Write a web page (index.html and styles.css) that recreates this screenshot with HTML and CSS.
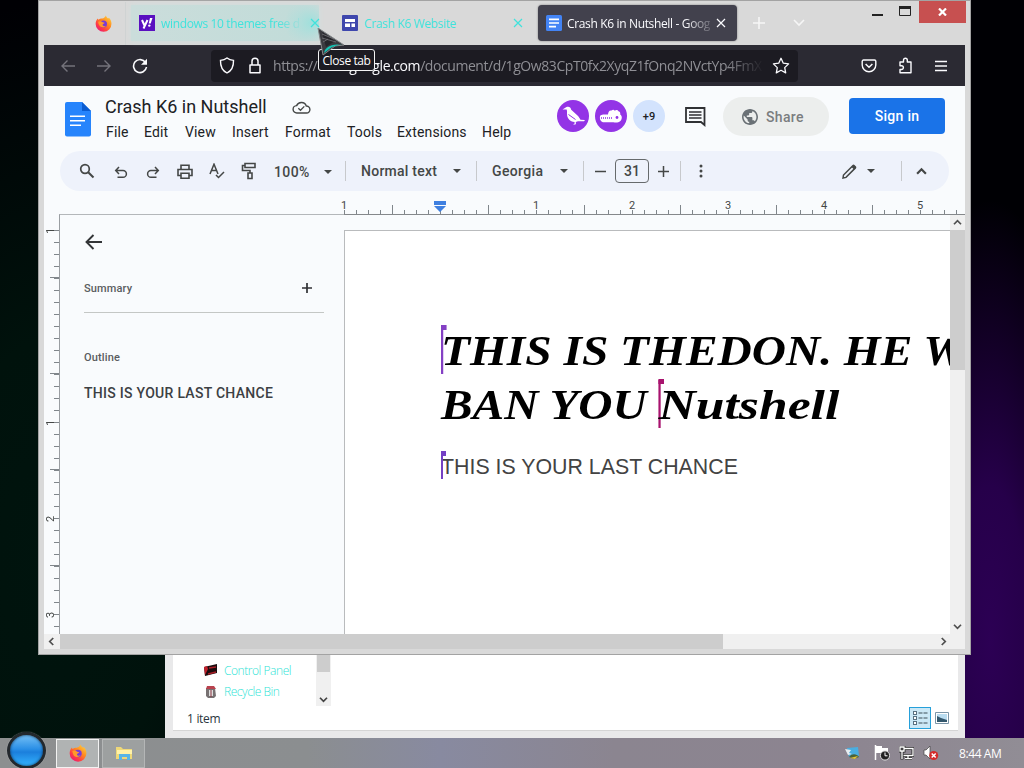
FILE: index.html
```html
<!DOCTYPE html>
<html lang="en">
<head>
    <meta charset="UTF-8">
    <meta name="viewport" content="width=device-width, initial-scale=1.0">
    <title>Crash K6 in Nutshell - Google Docs</title>
    <link rel="stylesheet" href="styles.css">
</head>
<body>
    <svg width="0" height="0" class="defs">
        <defs>
            <linearGradient id="fox" x1="1" y1="0" x2="0.2" y2="1">
                <stop offset="0" stop-color="#ffe14a"/>
                <stop offset="0.45" stop-color="#ff8a1f"/>
                <stop offset="0.75" stop-color="#ff3d45"/>
                <stop offset="1" stop-color="#e8167b"/>
            </linearGradient>
            <symbol id="firefox" viewBox="0 0 16 16">
                <path fill="url(#fox)" d="M10.2 0.4c.4 1.4 1.3 2 2.2 3l.7-.7c1.6 1.5 2.4 3.400 2.400 5.600A7.400 7.400 0 0 1 .6 8.400c0-2 .6-3.900 2-5.200l.5 1.200c1-.6 2.200-1.100 3.700-1.100C8.300 3 9.500 2 10.200.4z"/>
                <circle cx="8" cy="8.400" r="3.300" fill="#7a3bd6"/>
                <path fill="#ff9a2a" d="M3 6.300c1.500-.9 3-.5 4.300.5 1 .2 1.700.3 1.600.8-.3.700-1.500.8-1.800 1.500 0 1.300 1.700 1.800 3.200 1-1.400 2-5 2-6.300-.4-.6-1-.9-2.200-1-3.400z"/>
            </symbol>
            <symbol id="cross" viewBox="0 0 10 10">
                <path d="M1 1l8 8M9 1L1 9" fill="none" stroke="currentColor" stroke-width="1.200"/>
            </symbol>
            <symbol id="caret" viewBox="0 0 8 4"><path d="M0 0h8L4 4z" fill="currentColor"/></symbol>
            <symbol id="chev" viewBox="0 0 10 8"><path d="M1 6l4-4 4 4" fill="none" stroke="currentColor" stroke-width="2"/></symbol>
        </defs>
    </svg>

    <div class="desktop">

        <!-- explorer window, mostly behind the browser -->
        <div class="explorer">
            <div class="explorer-body">
                <div class="tree">
                    <div class="tree-item">
                        <svg width="14" height="13" viewBox="0 0 14 13"><path d="M0 3l13-3v9L1 12z" fill="#1b0c0e"/><path d="M0 3l3-1 1 3-3 6z" fill="#c3202c"/><path d="M5 4l7-1M4 10l8-2" stroke="#a91f28" stroke-width="1.500"/></svg>
                        <span>Control Panel</span>
                    </div>
                    <div class="tree-item bin">
                        <svg width="14" height="14" viewBox="0 0 14 14"><path d="M2 3h9l1 8-2 2H4l-2-2z" fill="#777172"/><path d="M3 1h7l2 3H2z" fill="#b9424e"/><path d="M5 5h4v6H5z" fill="#ddd"/><path d="M7 5v7" stroke="#8d3540"/></svg>
                        <span>Recycle Bin</span>
                    </div>
                </div>
                <div class="tree-scroll">
                    <div class="tree-thumb"></div>
                    <svg class="flip" width="9" height="7"><use href="#chev"/></svg>
                </div>
            </div>
            <div class="explorer-status">
                <span>1 item</span>
                <div class="view-btn active">
                    <svg width="16" height="14" viewBox="0 0 16 14"><g fill="#fff" stroke="#587080"><rect x="1.500" y=".5" width="3" height="3"/><rect x="1.500" y="5.500" width="3" height="3"/><rect x="1.500" y="10.500" width="3" height="3"/></g><path d="M6.500 2h4m1 0h4M6.500 7h4m1 0h4M6.500 12h4m1 0h4" stroke="#3d4e58"/></svg>
                </div>
                <div class="view-btn">
                    <svg width="14" height="12" viewBox="0 0 14 12"><path d="M.5.5h13v11H.5z" fill="#fff" stroke="#7b95a8"/><path d="M2 2h10v8H2z" fill="#b9dcf0"/><path d="M2 4l4 2 6 2v2H2z" fill="#33576c"/></svg>
                </div>
            </div>
        </div>

        <!-- firefox window -->
        <div class="browser">
            <div class="tabs">
                <div class="pinned"><svg width="17" height="17"><use href="#firefox"/></svg></div>
                <div class="tab hover">
                    <svg width="16" height="16" viewBox="0 0 16 16"><rect width="16" height="16" fill="#5a10c0"/><path d="M3 5l2.500 5.500M8.500 5l-4 8.500" fill="none" stroke="#fff" stroke-width="2"/><path d="M11 3h2.500l-1.800 5.500h-2z" fill="#fff"/><circle cx="10.300" cy="10.600" r="1.200" fill="#fff"/></svg>
                    <span class="tab-title t1">windows 10 themes free d</span>
                    <svg class="tab-x" width="10" height="10"><use href="#cross"/></svg>
                </div>
                <div class="tab">
                    <svg width="16" height="16" viewBox="0 0 16 16"><rect width="16" height="16" rx="1" fill="#3f47ad"/><path d="M3 4h10v3H3zM3 8.500h5V12H3zM9.500 8.500H13V12H9.500z" fill="#fff"/></svg>
                    <span class="tab-title t2">Crash K6 Website</span>
                    <svg class="tab-x" width="10" height="10"><use href="#cross"/></svg>
                </div>
                <div class="tab current">
                    <svg width="16" height="16" viewBox="0 0 16 16"><rect width="16" height="16" rx="1.500" fill="#4384f5"/><path d="M3 4.300h10M3 8h10M3 11.700h7" stroke="#fff" stroke-width="1.700"/></svg>
                    <span class="tab-title t3">Crash K6 in Nutshell - Goog</span>
                    <svg class="tab-x" width="10" height="10"><use href="#cross"/></svg>
                </div>
                <svg class="tab-tool" width="12" height="12" viewBox="0 0 12 12"><path d="M6 0v12M0 6h12" stroke="#f6f6f6" stroke-width="1.600"/></svg>
                <svg class="tab-tool list" width="12" height="8" viewBox="0 0 12 8"><path d="M1 1l5 5 5-5" fill="none" stroke="#f6f6f6" stroke-width="1.600"/></svg>
                <div class="win-btns">
                    <svg width="12" height="10" viewBox="0 0 12 10"><rect width="11" height="2" y="8" x="0" fill="#222"/></svg>
                    <svg width="12" height="10" viewBox="0 0 12 10"><path d="M.5 1.500h11v8H.5z" fill="none" stroke="#222"/><path d="M0 0h12v3H0z" fill="#222"/></svg>
                    <div class="win-close"><svg width="9" height="8" viewBox="0 0 9 8"><path d="M1 0.500l7 7M8 .5l-7 7" stroke="#fff" stroke-width="2.200"/></svg></div>
                </div>
            </div>

            <div class="navbar">
                <svg class="dim" width="16" height="14" viewBox="0 0 16 14"><path d="M15 7H2M7.500 1.500L2 7l5.500 5.500" fill="none" stroke="currentColor" stroke-width="1.400"/></svg>
                <svg class="dim" width="16" height="14" viewBox="0 0 16 14"><path d="M1 7h13M8.500 1.500L14 7l-5.500 5.500" fill="none" stroke="currentColor" stroke-width="1.400"/></svg>
                <svg class="reload" width="16" height="16" viewBox="0 0 16 16"><path d="M13.500 4.500A6.500 6.500 0 1 0 14.500 9" fill="none" stroke="currentColor" stroke-width="1.600"/><path d="M15 .8v6H9z" fill="currentColor"/></svg>
                <div class="urlbar">
                    <svg width="16" height="17" viewBox="0 0 16 17"><path d="M8 1c2 1.600 4.200 2.200 6.500 2.400C14.700 9.500 12.800 13.500 8 16 3.200 13.500 1.300 9.500 1.500 3.400 3.800 3.200 6 2.600 8 1z" fill="none" stroke="currentColor" stroke-width="1.400"/></svg>
                    <svg class="lock" width="12" height="17" viewBox="0 0 12 17"><path d="M1 8h10v7.800H1zM3 8V4.200a3 3 0 0 1 6 0V8" fill="none" stroke="currentColor" stroke-width="1.500" stroke-linejoin="round"/></svg>
                    <div class="url">https://docs.<b>google.com</b>/document/d/1gOw83CpT0fx2XyqZ1fOnq2NVctYp4FmX</div>
                    <svg width="18" height="17" viewBox="0 0 18 17"><path d="M9 1.300l2.300 4.900 5.300.7-3.900 3.700 1 5.300L9 13.300l-4.700 2.600 1-5.300L1.400 6.900l5.300-.7z" fill="none" stroke="currentColor" stroke-width="1.300" stroke-linejoin="round"/></svg>
                </div>
                <svg width="16" height="14" viewBox="0 0 16 14"><path d="M2.500 1h11a1.300 1.300 0 0 1 1.300 1.300V6a6.800 6.800 0 0 1-13.600 0V2.300A1.300 1.300 0 0 1 2.500 1z" fill="none" stroke="currentColor" stroke-width="1.400"/><path d="M4.600 5L8 8.300 11.400 5" fill="none" stroke="currentColor" stroke-width="1.500"/></svg>
                <svg width="15" height="17" viewBox="0 0 15 17"><path d="M2 5h3.500V3.200a1.900 1.900 0 0 1 3.800 0V5H13v10.800H2v-3.300h1.500a1.900 1.900 0 0 0 0-3.800H2z" fill="none" stroke="currentColor" stroke-width="1.400" stroke-linejoin="round"/></svg>
                <svg width="14" height="12" viewBox="0 0 14 12"><path d="M1 1.500h12M1 6h12M1 10.500h12" stroke="currentColor" stroke-width="1.400"/></svg>
            </div>

            <div class="docs">
                <div class="docs-header">
                    <svg class="docs-logo" width="26" height="35" viewBox="0 0 26 35"><path d="M2 0h15l9 9v23.500a2 2 0 0 1-2 2H2a2 2 0 0 1-2-2V2a2 2 0 0 1 2-2z" fill="#2684fc"/><path d="M17 0l9 9h-9z" fill="#0b5cd0"/><path d="M5 14.300h15M5 18.800h15M5 23.300h11" stroke="#fff" stroke-width="1.600"/></svg>
                    <div class="docs-title">
                        <div class="title-row">
                            <span class="doc-name">Crash K6 in Nutshell</span>
                            <svg width="19" height="13" viewBox="0 0 19 13"><path d="M5 12a3.700 3.700 0 0 1-.4-7.400A5.200 5.200 0 0 1 14.300 5 3.500 3.500 0 0 1 14.500 12z" fill="none" stroke="#444746" stroke-width="1.400"/><path d="M6.300 7.300l2.200 2L12.300 5.400" fill="none" stroke="#444746" stroke-width="1.300"/></svg>
                        </div>
                        <div class="menu">
                            <span>File</span><span>Edit</span><span>View</span><span>Insert</span><span>Format</span><span>Tools</span><span>Extensions</span><span>Help</span>
                        </div>
                    </div>
                    <div class="people">
                        <div class="avatar"><svg width="32" height="32" viewBox="0 0 32 32"><path d="M5.500 9.500L9.500 7c2.500-.8 4.300.3 4.700 2.800l6.300 5.700c1.400 1.400 2.300 3 3 4.200l4.500.3-1 1.200-6 .1-2.200.8.1 2.100-2.300.6v-.8l1.100-.4-.2-1.700c-4.500-.2-7.500-3.500-7.500-8.200 0-1.600.2-2.800-.4-4.200z" fill="#fff"/><path d="M11.500 14.500l7 5" stroke="#9334e6"/></svg></div>
                        <div class="avatar"><svg width="32" height="32" viewBox="0 0 32 32"><path d="M5 16.500c0-2 3-2.200 8-2 .2-2.500 1.200-4.500 3.500-4 1.200-1 2.500-.8 3.300.2 1-1 3-.8 3.700.6 1.700.5 2 1.900 1.700 3.200 2 1 2.200 4.500.2 6.500-2 1.800-4.500 1.800-7 1.300H9c-3 0-4.500-2.800-4-5.800z" fill="#fff"/><path d="M6 18h12" stroke="#9334e6" stroke-width="1.300" stroke-dasharray="1 1"/><circle cx="22" cy="17.500" r="1.400" fill="#9334e6"/></svg></div>
                        <div class="avatar more">+9</div>
                    </div>
                    <svg class="comments" width="21" height="20" viewBox="0 0 21 20"><path d="M1 1h18.500v17l-3.500-3H1z" fill="none" stroke="#303134" stroke-width="1.800"/><path d="M4 5h12.500M4 8h12.500M4 11h12.500" stroke="#303134" stroke-width="1.500"/></svg>
                    <div class="share">
                        <svg width="16" height="16" viewBox="2 2 20 20"><path fill="#6a7176" d="M12 2C6.480 2 2 6.480 2 12s4.480 10 10 10 10-4.480 10-10S17.520 2 12 2zm-1 17.930c-3.950-.49-7-3.850-7-7.930 0-.62.080-1.210.21-1.790L9 15v1c0 1.100.9 2 2 2v1.930zm6.900-2.540c-.26-.81-1-1.390-1.900-1.390h-1v-3c0-.55-.45-1-1-1H8v-2h2c.55 0 1-.45 1-1V7h2c1.100 0 2-.9 2-2v-.41c2.930 1.190 5 4.060 5 7.410 0 2.080-.8 3.970-2.100 5.390z"/></svg>
                        <span>Share</span>
                    </div>
                    <div class="sign-in">Sign in</div>
                </div>

                <div class="toolbar">
                    <div class="tb search"><svg width="16" height="16" viewBox="0 0 16 16"><circle cx="6" cy="6" r="4.300" fill="none" stroke="currentColor" stroke-width="1.700"/><path d="M9.200 9.200l5.300 5.300" stroke="currentColor" stroke-width="2"/></svg></div>
                    <div class="tb"><svg width="14" height="13" viewBox="0 0 14 13"><path d="M2 4.500h7a3.300 3.300 0 0 1 0 6.800H3.500M5 1L1.700 4.500 5 8" fill="none" stroke="currentColor" stroke-width="1.500"/></svg></div>
                    <div class="tb"><svg width="14" height="13" viewBox="0 0 14 13"><path d="M12 4.500H5a3.300 3.300 0 0 0 0 6.800h5.500M9 1l3.300 3.500L9 8" fill="none" stroke="currentColor" stroke-width="1.500"/></svg></div>
                    <div class="tb"><svg width="16" height="15" viewBox="0 0 16 15"><path d="M4 5V1.200h8V5M4 11.500H1V5.500h14v6h-3M4 9.200h8v5H4z" fill="none" stroke="currentColor" stroke-width="1.600"/></svg></div>
                    <div class="tb"><svg width="16" height="16" viewBox="0 0 16 16"><path d="M1 11L5 1.200 9 11M2.300 7.500h5.400M7 12l2.500 2.500L15 9" fill="none" stroke="currentColor" stroke-width="1.500"/></svg></div>
                    <div class="tb"><svg width="16" height="18" viewBox="0 0 16 18"><path d="M4 1.500h10v4H4zM4 3.500H1.500v5H9V11M7 11h4v5.500H7z" fill="none" stroke="currentColor" stroke-width="1.600"/></svg></div>
                    <div class="select zoom"><span>100%</span><svg width="8" height="4"><use href="#caret"/></svg></div>
                    <div class="select style"><span>Normal text</span><svg width="8" height="4"><use href="#caret"/></svg></div>
                    <div class="select font"><span>Georgia</span><svg width="8" height="4"><use href="#caret"/></svg></div>
                    <div class="size">
                        <svg width="11" height="11" viewBox="0 0 11 11"><path d="M0 5.500h11" stroke="currentColor" stroke-width="1.500"/></svg>
                        <span class="size-box">31</span>
                        <svg width="11" height="11" viewBox="0 0 11 11"><path d="M0 5.500h11M5.500 0v11" stroke="currentColor" stroke-width="1.500"/></svg>
                    </div>
                    <svg class="dots" width="4" height="14" viewBox="0 0 4 14"><g fill="currentColor"><circle cx="2" cy="2" r="1.500"/><circle cx="2" cy="7" r="1.500"/><circle cx="2" cy="12" r="1.500"/></g></svg>
                    <div class="mode">
                        <svg width="15" height="15" viewBox="0 0 15 15"><path d="M1 14l.5-3L10.800 1.700a1 1 0 0 1 1.400 0l1 1a1 1 0 0 1 0 1.400L4 13.400z" fill="none" stroke="currentColor" stroke-width="1.500"/><path d="M9.500 3l2.500 2.500 2-2L11.500 1z" fill="currentColor"/></svg>
                        <svg width="8" height="4"><use href="#caret"/></svg>
                    </div>
                    <div class="collapse"><svg width="11" height="9"><use href="#chev"/></svg></div>
                </div>

                <div class="ruler-h">
                    <span>1</span>
                    <span><svg width="12" height="11" viewBox="0 0 12 11"><path d="M0 0h12v4H0zM0 5h12L6 11z" fill="#3f7fe0"/></svg></span>
                    <span>1</span><span>2</span><span>3</span><span>4</span><span>5</span>
                </div>

                <div class="workspace">
                    <div class="ruler-v">
                        <span>1</span><span></span><span>1</span><span>2</span><span>3</span>
                    </div>
                    <div class="outline">
                        <svg class="back" width="17" height="16" viewBox="0 0 17 16"><path d="M17 8H2M8.500 1L1.500 8l7 7" fill="none" stroke="#333537" stroke-width="1.900"/></svg>
                        <div class="outline-head">
                            <span>Summary</span>
                            <svg width="10" height="10" viewBox="0 0 10 10"><path d="M0 5h10M5 0v10" stroke="#303134" stroke-width="1.700"/></svg>
                        </div>
                        <div class="outline-label">Outline</div>
                        <div class="outline-item">THIS IS YOUR LAST CHANCE</div>
                    </div>
                    <div class="canvas">
                        <div class="page">
                            <div class="heading"><span class="line"><i class="caret purple"></i>THIS IS THEDON. HE WILL</span><span class="line">BAN YOU <i class="caret pink"></i><span class="wide">Nutshell</span></span></div>
                            <div class="sub"><i class="caret violet"></i>THIS IS YOUR LAST CHANCE</div>
                        </div>
                    </div>
                    <div class="scroll-v">
                        <svg width="9" height="7"><use href="#chev"/></svg>
                        <div class="thumb"></div>
                        <svg class="flip" width="9" height="7"><use href="#chev"/></svg>
                    </div>
                </div>
                <div class="scroll-h">
                    <div class="arrow"><svg class="left" width="9" height="7"><use href="#chev"/></svg></div>
                    <div class="thumb"></div>
                    <svg class="right" width="9" height="7"><use href="#chev"/></svg>
                </div>
            </div>
        </div>

        <div class="tooltip">Close tab</div>
        <svg class="cursor" width="30" height="28" viewBox="0 0 30 28"><path d="M1 0l26 17-9 1-12 9z" fill="#3b3b40" stroke="#85898b"/><path d="M5 4l13 9-9 6z" fill="#26262b"/><path d="M5 6l12 5M5 10l14 4M6 14l5-3" stroke="#77777c" stroke-width=".8"/><path d="M7 25c1-6 8-10 18-8-6 0-11 2-14 5z" fill="#13c5b5"/></svg>

        <div class="taskbar">
            <div class="start"></div>
            <div class="task active"><svg width="18" height="18"><use href="#firefox"/></svg></div>
            <div class="task"><svg width="18" height="16" viewBox="0 0 18 16"><path d="M1 2h5l2 2h9v10H1z" fill="#eed878"/><path d="M2 5h15v4H2z" fill="#fff2a8"/><path d="M4 15V9h11v6h-3v-3H7v3z" fill="#58b5e6"/></svg></div>
            <div class="tray">
                <svg width="16" height="14" viewBox="0 0 16 14"><path d="M3 2l11-1 1 9-10 1z" fill="#4aaee0"/><path d="M1 3l6 1-2 3 3 1-4 1z" fill="#e6eef2"/><path d="M5 11c3-4 8-3 10 0l-5 2z" fill="#4a6238"/><path d="M6 12l8-2-3 3z" fill="#e4c43a"/></svg>
                <svg width="16" height="16" viewBox="0 0 16 16"><path d="M1.500 0v15" stroke="#fff" stroke-width="1.500"/><path d="M2 1h6v2h6v5H2z" fill="#fff"/><circle cx="11" cy="10.500" r="4.600" fill="#222" stroke="#ddd"/><path d="M11 7.500v3.300h2.500" fill="none" stroke="#fff"/></svg>
                <svg width="15" height="14" viewBox="0 0 15 14"><path d="M5 2.500h9v7H4.500M9 9.500V12M6 12.700h7M1 1h4v4H1zM3 5v8.500" fill="none" stroke="#2a2a2a" stroke-width="3"/><path d="M5 2.500h9v7H4.500M9 9.500V12M6 12.700h7M1 1h4v4H1zM3 5v8" fill="none" stroke="#fff" stroke-width="1.300"/></svg>
                <svg width="16" height="15" viewBox="0 0 16 15"><path d="M1 4h2l4-4v13L3 9H1z" fill="#fff" stroke="#444" stroke-width=".7"/><circle cx="10.700" cy="9.500" r="4.500" fill="#d42b2b"/><path d="M8.700 7.500l4 4M12.700 7.500l-4 4" stroke="#fff" stroke-width="1.500"/></svg>
            </div>
            <div class="clock">8:44 AM</div>
        </div>
    </div>
</body>
</html>
```

FILE: styles.css
```css
* {
    box-sizing: border-box;
}
body {
    margin: 0;
    font-family: "Open Sans", "Noto Sans", sans-serif;
    overflow: hidden;
}
svg {
    display: block;
    flex: none;
}
.defs {
    position: absolute;
}
.flip {
    transform: rotate(180deg);
}
.left {
    transform: rotate(-90deg);
}
.right {
    transform: rotate(90deg);
}
.desktop {
    position: relative;
    width: 1024px;
    height: 768px;
    overflow: hidden;
    background:
        radial-gradient(ellipse 110px 440px at 990px 640px, #2c0054, #26004a 35%, transparent),
        radial-gradient(ellipse 300px 560px at 60px 560px, #00140e, #00120c 40%, transparent),
        #000004;
}

/* explorer */
.explorer {
    position: absolute;
    left: 165px;
    top: 640px;
    width: 800px;
    height: 98px;
    padding: 0 7px 7px 8px;
    background: #e9e9ea;
}
.explorer-body {
    display: flex;
    height: 66px;
    background: #fff;
}
.tree {
    width: 143px;
    padding: 20px 0 0 31px;
}
.tree-item {
    display: flex;
    align-items: center;
    gap: 6px;
    height: 21px;
    font-size: 12px;
    letter-spacing: -0.45px;
    font-weight: 300;
    color: #2fe3d6;
    white-space: nowrap;
}
.tree-scroll {
    display: flex;
    flex-direction: column;
    justify-content: space-between;
    align-items: center;
    width: 15px;
    padding-bottom: 3px;
    background: #f0f0f0;
    color: #444;
}
.tree-thumb {
    width: 13px;
    height: 32px;
    background: #cdcdcd;
}
.explorer-status {
    display: flex;
    align-items: center;
    height: 25px;
    padding: 0 5px 0 14px;
    background: #fff;
    border-bottom: 1px solid #d5d5d5;
    font-size: 12px;
    letter-spacing: -0.3px;
    color: #2b3640;
}
.explorer-status span {
    flex: 1;
}
.view-btn {
    display: flex;
    align-items: center;
    justify-content: center;
    width: 22px;
    height: 22px;
}
.view-btn.active {
    background: #cbe8f6;
    border: 1px solid #26a0da;
}

/* browser */
.browser {
    position: absolute;
    left: 38px;
    top: 0;
    width: 933px;
    height: 655px;
    padding: 0 5px 5px;
    background: #d9d9d9;
    border: 1px solid #a3a3a3;
}
.tabs {
    display: flex;
    align-items: center;
    height: 44px;
    font-size: 12px;
    color: #3fe3dc;
}
.pinned {
    display: flex;
    justify-content: flex-end;
    width: 82px;
    height: 43px;
    align-items: center;
    padding-right: 13px;
    border-right: 1px solid #cfd3d3;
}
.tab {
    display: flex;
    align-items: center;
    gap: 6px;
    width: 204px;
    height: 36px;
    padding: 0 8px;
}
.tab.hover {
    margin-left: 5px;
    background: radial-gradient(circle 26px at 180px 18px, #a0e0dc, transparent), linear-gradient(90deg, #cbdddb, #c2dcd9 85%, transparent);
    box-shadow: 0 0 5px #cfe0de;
    width: 188px;
    margin-right: 15px;
}
.tab-title {
    flex: none;
    overflow: hidden;
    white-space: nowrap;
    line-height: 18px;
    padding-top: 1px;
    letter-spacing: -0.35px;
}
.t1 {
    width: 143px;
    -webkit-mask-image: linear-gradient(90deg, #000 80%, transparent);
    mask-image: linear-gradient(90deg, #000 80%, transparent);
}
.t2 {
    width: 143px;
}
.t3 {
    width: 144px;
    -webkit-mask-image: linear-gradient(90deg, #000 82%, transparent 104%);
    mask-image: linear-gradient(90deg, #000 82%, transparent 104%);
}
.tab.current {
    width: 199px;
    gap: 5px;
    background: #42414d;
    color: #fbfbfe;
    border-radius: 4px;
    box-shadow: 0 0 2px #777;
}
.tab-tool {
    margin-left: 16px;
}
.tab-tool.list {
    margin-left: 28px;
}
.win-btns {
    display: flex;
    align-self: flex-start;
    margin-left: auto;
    margin-right: -1px;
    gap: 15px;
    padding-top: 5px;
}
.win-btns > svg + svg {
    margin-right: -7px;
}
.win-close {
    display: flex;
    align-items: center;
    justify-content: center;
    width: 47px;
    height: 22px;
    margin-top: -5px;
    background: #c75050;
}
.navbar {
    display: flex;
    align-items: center;
    height: 41px;
    padding: 0 17px 0 16px;
    gap: 21px;
    background: #2b2a33;
    color: #fbfbfe;
}
.dim {
    color: #74737b;
}
.navbar .dim + .dim {
    margin-left: -1px;
}
.reload {
    margin-left: -1px;
    margin-right: 56px;
}
.urlbar {
    display: flex;
    align-items: center;
    width: 587px;
    height: 32px;
    margin: 0 42px 0 -14px;
    padding: 0 8px;
    background: #1c1b22;
    border-radius: 4px;
}
.lock {
    margin: 0 12px 0 14px;
}
.url {
    flex: 1;
    overflow: hidden;
    white-space: nowrap;
    font-size: 14px;
    line-height: 22px;
    letter-spacing: -0.43px;
    color: #8f8f95;
    margin-right: 8px;
    -webkit-mask-image: linear-gradient(90deg, #000 92%, transparent);
    mask-image: linear-gradient(90deg, #000 92%, transparent);
}
.url b {
    font-weight: 400;
    color: #fbfbfe;
}

/* docs */
.docs {
    height: 563px;
    background: #f9fbfd;
    font-family: Roboto, sans-serif;
    color: #202124;
}
.docs-header {
    display: flex;
    height: 65px;
    padding: 0 20px 0 21px;
}
.docs-logo {
    margin-top: 16px;
}
.docs-title {
    width: 465px;
    padding: 9px 0 0 14px;
}
.title-row {
    display: flex;
    align-items: center;
    height: 24px;
}
.doc-name {
    width: 187px;
    font-size: 18px;
    line-height: 22px;
    padding-bottom: 1px;
}
.menu {
    display: grid;
    grid-template-columns: 38px 41px 47px 53px 62px 50px 85px 40px;
    padding-left: 1px;
    line-height: 27px;
    font-size: 14px;
    letter-spacing: 0.15px;
}
.people {
    display: flex;
    gap: 6px;
    padding-top: 14px;
    margin-left: 1px;
}
.avatar {
    width: 32px;
    height: 32px;
    border-radius: 50%;
    background: #9334e6;
}
.avatar.more {
    background: #d3e3fd;
    font-size: 11px;
    font-weight: 500;
    line-height: 33px;
    text-align: center;
}
.comments {
    margin: 21px 17px 0 20px;
}
.share {
    display: flex;
    align-items: center;
    width: 106px;
    height: 39px;
    margin-top: 11px;
    padding-left: 19px;
    gap: 8px;
    border-radius: 20px;
    background: #eceeed;
    color: #7a7d7f;
    font-size: 14px;
    font-weight: 500;
    letter-spacing: 0.35px;
}
.sign-in {
    width: 96px;
    height: 36px;
    margin: 12px 0 0 20px;
    border-radius: 4px;
    background: #1a73e8;
    color: #fff;
    font-size: 14px;
    font-weight: 500;
    letter-spacing: 0.3px;
    line-height: 36px;
    text-align: center;
}
.toolbar {
    display: flex;
    align-items: center;
    height: 40px;
    margin: 0 16px;
    padding-left: 9px;
    border-radius: 20px;
    background: #eef2fb;
    color: #444746;
    font-size: 14px;
    font-weight: 500;
}
.tb {
    display: flex;
    justify-content: center;
    width: 32px;
}
.tb.search {
    width: 36px;
}
.tb:nth-child(2),
.tb:nth-child(3) {
    padding-top: 3px;
}
.select {
    display: flex;
    align-items: center;
    justify-content: space-between;
    height: 20px;
    border-right: 1px solid #c7c9cc;
}
.zoom {
    width: 81px;
    padding: 1px 13px 0 9px;
    letter-spacing: 0.4px;
}
.style {
    width: 131px;
    padding: 0 15px;
    letter-spacing: 0.25px;
}
.font {
    width: 107px;
    padding: 0 15px;
    letter-spacing: 0.35px;
}
.size {
    display: flex;
    align-items: center;
    width: 97px;
    height: 20px;
    padding-left: 11px;
    gap: 9px;
    border-right: 1px solid #c7c9cc;
}
.size-box {
    width: 34px;
    height: 24px;
    flex: none;
    border: 1px solid #666a6c;
    border-radius: 4px;
    line-height: 22px;
    text-align: center;
}
.dots {
    margin-left: 18px;
}
.mode {
    display: flex;
    align-items: center;
    gap: 10px;
    height: 20px;
    width: 60px;
    margin-left: auto;
    border-right: 1px solid #c7c9cc;
}
.collapse {
    width: 47px;
    padding-left: 14px;
}
.ruler-h {
    display: flex;
    height: 23px;
    padding: 8px 0 0 252px;
    font-size: 11px;
    color: #444746;
    background:
        repeating-linear-gradient(90deg, #80868b 0 1px, transparent 1px 12px) 300px 100% / 100% 4px no-repeat,
        repeating-linear-gradient(90deg, transparent 0 48px, #80868b 48px 49px, transparent 49px 96px) 300px 100% / 100% 9px no-repeat;
}
.ruler-h span {
    display: flex;
    justify-content: center;
    flex: none;
    width: 96px;
    line-height: 13px;
    height: 15px;
    overflow: hidden;
}
.ruler-h svg {
    margin-top: 2px;
}
.workspace {
    display: flex;
    height: 420px;
}
.ruler-v {
    width: 15px;
    height: 420px;
    overflow: hidden;
    font-size: 11px;
    color: #444746;
    background:
        repeating-linear-gradient(180deg, #80868b 0 1px, transparent 1px 12px) 100% 16px / 5px 100% no-repeat,
        repeating-linear-gradient(180deg, transparent 0 47px, #80868b 47px 48px, transparent 48px 96px) 100% 16px / 9px 100% no-repeat;
}
.ruler-v span {
    display: block;
    width: 13px;
    height: 96px;
    writing-mode: vertical-rl;
    transform: rotate(180deg);
    text-align: center;
    line-height: 13px;
}
.ruler-v span:first-child {
    margin-top: -31px;
}
.outline {
    width: 285px;
    padding: 19px 20px 0 24px;
    border-top: 1px solid #b4b7ba;
    border-left: 1px solid #9a9ea2;
}
.back {
    margin-left: 1px;
}
.outline-head {
    display: flex;
    justify-content: space-between;
    align-items: center;
    height: 49px;
    margin-top: 14px;
    padding: 0 12px 0 0;
    border-bottom: 1px solid #c4c7c5;
    font-size: 11px;
    font-weight: 500;
    letter-spacing: 0.15px;
    color: #5a5d60;
}
.outline-label {
    margin-top: 38px;
    font-size: 11px;
    font-weight: 500;
    letter-spacing: 0.15px;
    line-height: 14px;
    color: #5a5d60;
}
.outline-item {
    margin-top: 20px;
    font-size: 14px;
    font-weight: 500;
    letter-spacing: 0.28px;
    line-height: 16px;
    white-space: nowrap;
    color: #3c4043;
}
.canvas {
    width: 606px;
    padding-top: 15px;
    overflow: hidden;
    border-top: 1px solid #85888b;
}
.page {
    height: 404px;
    padding: 93px 0 0 96px;
    background: #fff;
    border: solid #b9bbbd;
    border-width: 1px 0 0 1px;
}
.heading {
    font-family: "Liberation Serif", serif;
    font-size: 42.5px;
    font-weight: 700;
    font-style: italic;
    line-height: 54px;
    color: #000;
}
.line {
    display: block;
    position: relative;
    white-space: nowrap;
    transform: scaleX(1.115);
    transform-origin: 0 0;
}
.wide {
    display: inline-block;
    transform: scaleX(1.09);
    transform-origin: 0 0;
}
.caret {
    display: inline-block;
    position: absolute;
    width: 2px;
    left: 0;
    top: 2px;
    height: 48px;
    background: #8440c4;
}
.caret::before {
    content: "";
    position: absolute;
    left: 0;
    top: -1px;
    width: 5px;
    height: 5px;
    background: inherit;
}
.caret.pink {
    left: 195px;
    background: #a8136e;
}
.caret.violet {
    top: -2px;
    height: 27px;
    background: #7440c4;
}
.sub {
    position: relative;
    margin-top: 22px;
    font-family: "Liberation Sans", sans-serif;
    font-size: 21.35px;
    line-height: 26px;
    color: #434343;
    white-space: nowrap;
}
.scroll-v {
    display: flex;
    flex-direction: column;
    align-items: center;
    width: 15px;
    padding: 4px 0 4px;
    border-top: 1px solid #85888b;
    background: #f0f0f0;
    color: #505050;
}
.scroll-v .thumb {
    width: 15px;
    height: 140px;
    margin: 4px 0 auto;
    background: #cdcdcd;
}
.scroll-h {
    display: flex;
    align-items: center;
    height: 15px;
    background: #f0f0f0;
    color: #505050;
}
.scroll-h .arrow {
    width: 16px;
    padding-left: 3px;
}
.scroll-h .thumb {
    width: 663px;
    height: 15px;
    background: #cdcdcd;
}
.scroll-h .right {
    margin-left: 216px;
}

/* overlays */
.tooltip {
    position: absolute;
    left: 318px;
    top: 49px;
    width: 57px;
    height: 22px;
    border: 1px solid #f4f4f4;
    border-radius: 3px;
    background: #1c1b22;
    color: #fff;
    font-size: 12px;
    letter-spacing: -0.4px;
    line-height: 22px;
    text-align: center;
    white-space: nowrap;
}
.cursor {
    position: absolute;
    left: 317px;
    top: 28px;
}

/* taskbar */
.taskbar {
    position: absolute;
    left: 0;
    top: 738px;
    width: 1024px;
    height: 30px;
    display: flex;
    align-items: center;
    padding-left: 7px;
    background: linear-gradient(90deg, #8d8f90, #8b8e90 30%, #888aa0 43%, #8b8590 60%, #8c8490 80%, #918d95);
}
.start {
    width: 39px;
    height: 37px;
    margin: -5px 10px 0 0;
    border-radius: 50%;
    border: 3px solid #23282d;
    box-shadow: inset 0 0 3px #0a3055, 0 0 1px #ccc;
    background: linear-gradient(#75c0f5, #2a8fe6 45%, #1b7fdc 55%, #35b4ff);
}
.task {
    display: flex;
    align-items: center;
    justify-content: center;
    width: 43px;
    height: 29px;
    margin-right: 3px;
    background: #9da0a0;
    border: 1px solid #b4b6b6;
}
.task.active {
    background: #b0b3b3;
    border: 1px solid #f2f2f2;
}
.tray {
    display: flex;
    align-items: center;
    gap: 9px;
    margin-left: auto;
    margin-right: 20px;
}
.tray svg:first-child {
    margin-right: 5px;
}
.clock {
    width: 65px;
    font-size: 12px;
    letter-spacing: -0.4px;
    color: #fff;
    white-space: nowrap;
}
```
